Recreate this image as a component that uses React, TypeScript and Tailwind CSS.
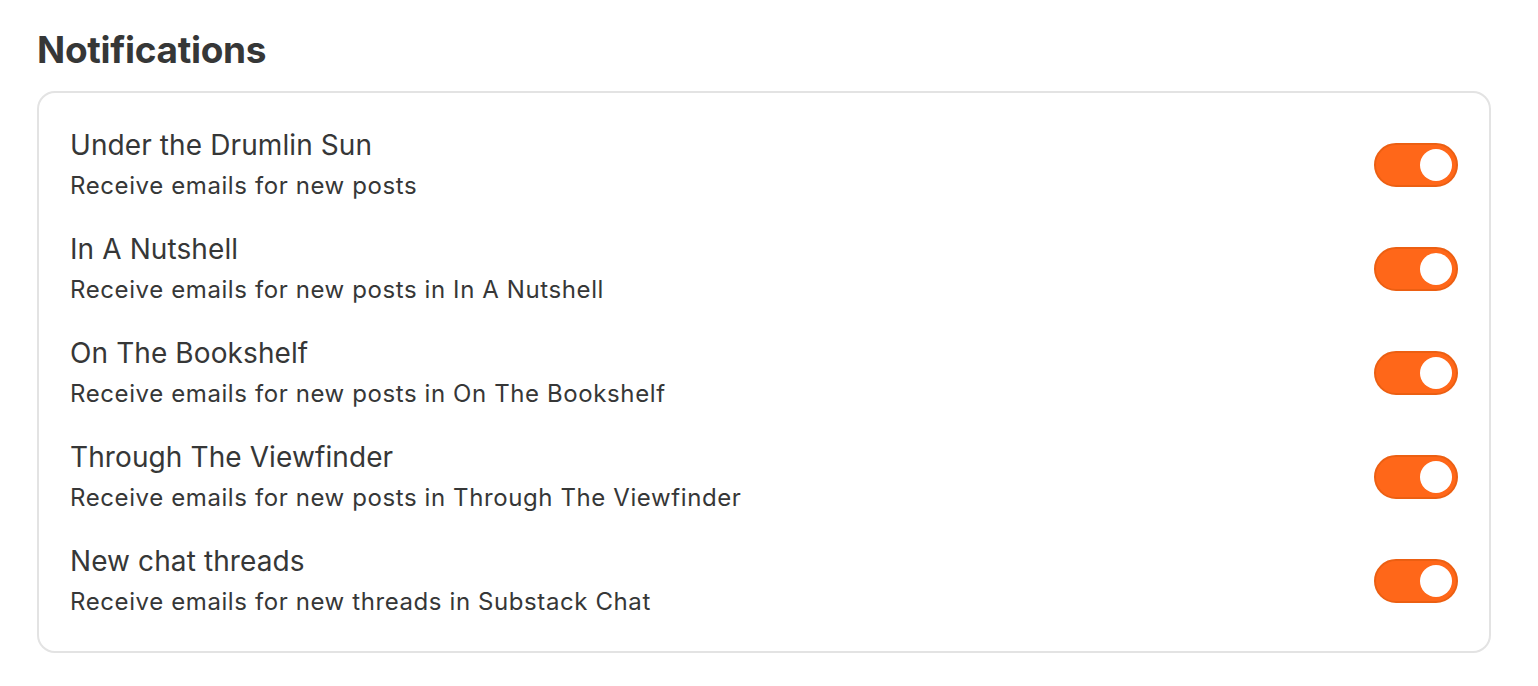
import { useState } from 'react'

type Pub = {
    id: string
    title: string
    description: string
}

const pubs: Pub[] = [
    { id: 'main', title: 'Under the Drumlin Sun', description: 'Receive emails for new posts' },
    { id: 'nutshell', title: 'In A Nutshell', description: 'Receive emails for new posts in In A Nutshell' },
    { id: 'bookshelf', title: 'On The Bookshelf', description: 'Receive emails for new posts in On The Bookshelf' },
    { id: 'viewfinder', title: 'Through The Viewfinder', description: 'Receive emails for new posts in Through The Viewfinder' },
    { id: 'chat', title: 'New chat threads', description: 'Receive emails for new threads in Substack Chat' },
]

function Toggle({ on, onChange }: { on: boolean; onChange: () => void }) {
    return (
        <button
            type="button"
            onClick={onChange}
            className={`relative flex items-center w-[84px] h-[44px] rounded-full border-2 shrink-0 px-[4px] ${
                on ? 'bg-[#ff6719] border-[#ec5f12] justify-end' : 'bg-[#e5e5e5] border-[#d6d6d6] justify-start'
            }`}
        >
            <span className="block w-[32px] h-[32px] rounded-full bg-white" />
        </button>
    )
}

export default function App() {
    const [enabled, setEnabled] = useState<Record<string, boolean>>({
        main: true,
        nutshell: true,
        bookshelf: true,
        viewfinder: true,
        chat: true,
    })

    return (
        <div className="min-h-screen bg-white px-[37px] pt-[25px] font-['Inter',sans-serif] text-[#363737]">
            <div className="w-[1454px]">
                {/* Header */}
                <h1 className="text-[37px] leading-[50px] font-bold tracking-[-0.3px] mb-[16px]">Notifications</h1>

                {/* Card */}
                <div className="border-2 border-[#e3e3e3] rounded-[18px] px-[31px] pt-[34px] pb-[33px] flex flex-col gap-[29px]">
                    {pubs.map((pub) => (
                        <div key={pub.id} className="flex items-center justify-between">
                            <div className="flex flex-col">
                                <span className="text-[28px] leading-[36px] tracking-[0.1px]">{pub.title}</span>
                                <span className="text-[24px] leading-[32px] mt-[7px] tracking-[0.6px]">{pub.description}</span>
                            </div>
                            <Toggle
                                on={enabled[pub.id]}
                                onChange={() => setEnabled((s) => ({ ...s, [pub.id]: !s[pub.id] }))}
                            />
                        </div>
                    ))}
                </div>
            </div>
        </div>
    )
}
